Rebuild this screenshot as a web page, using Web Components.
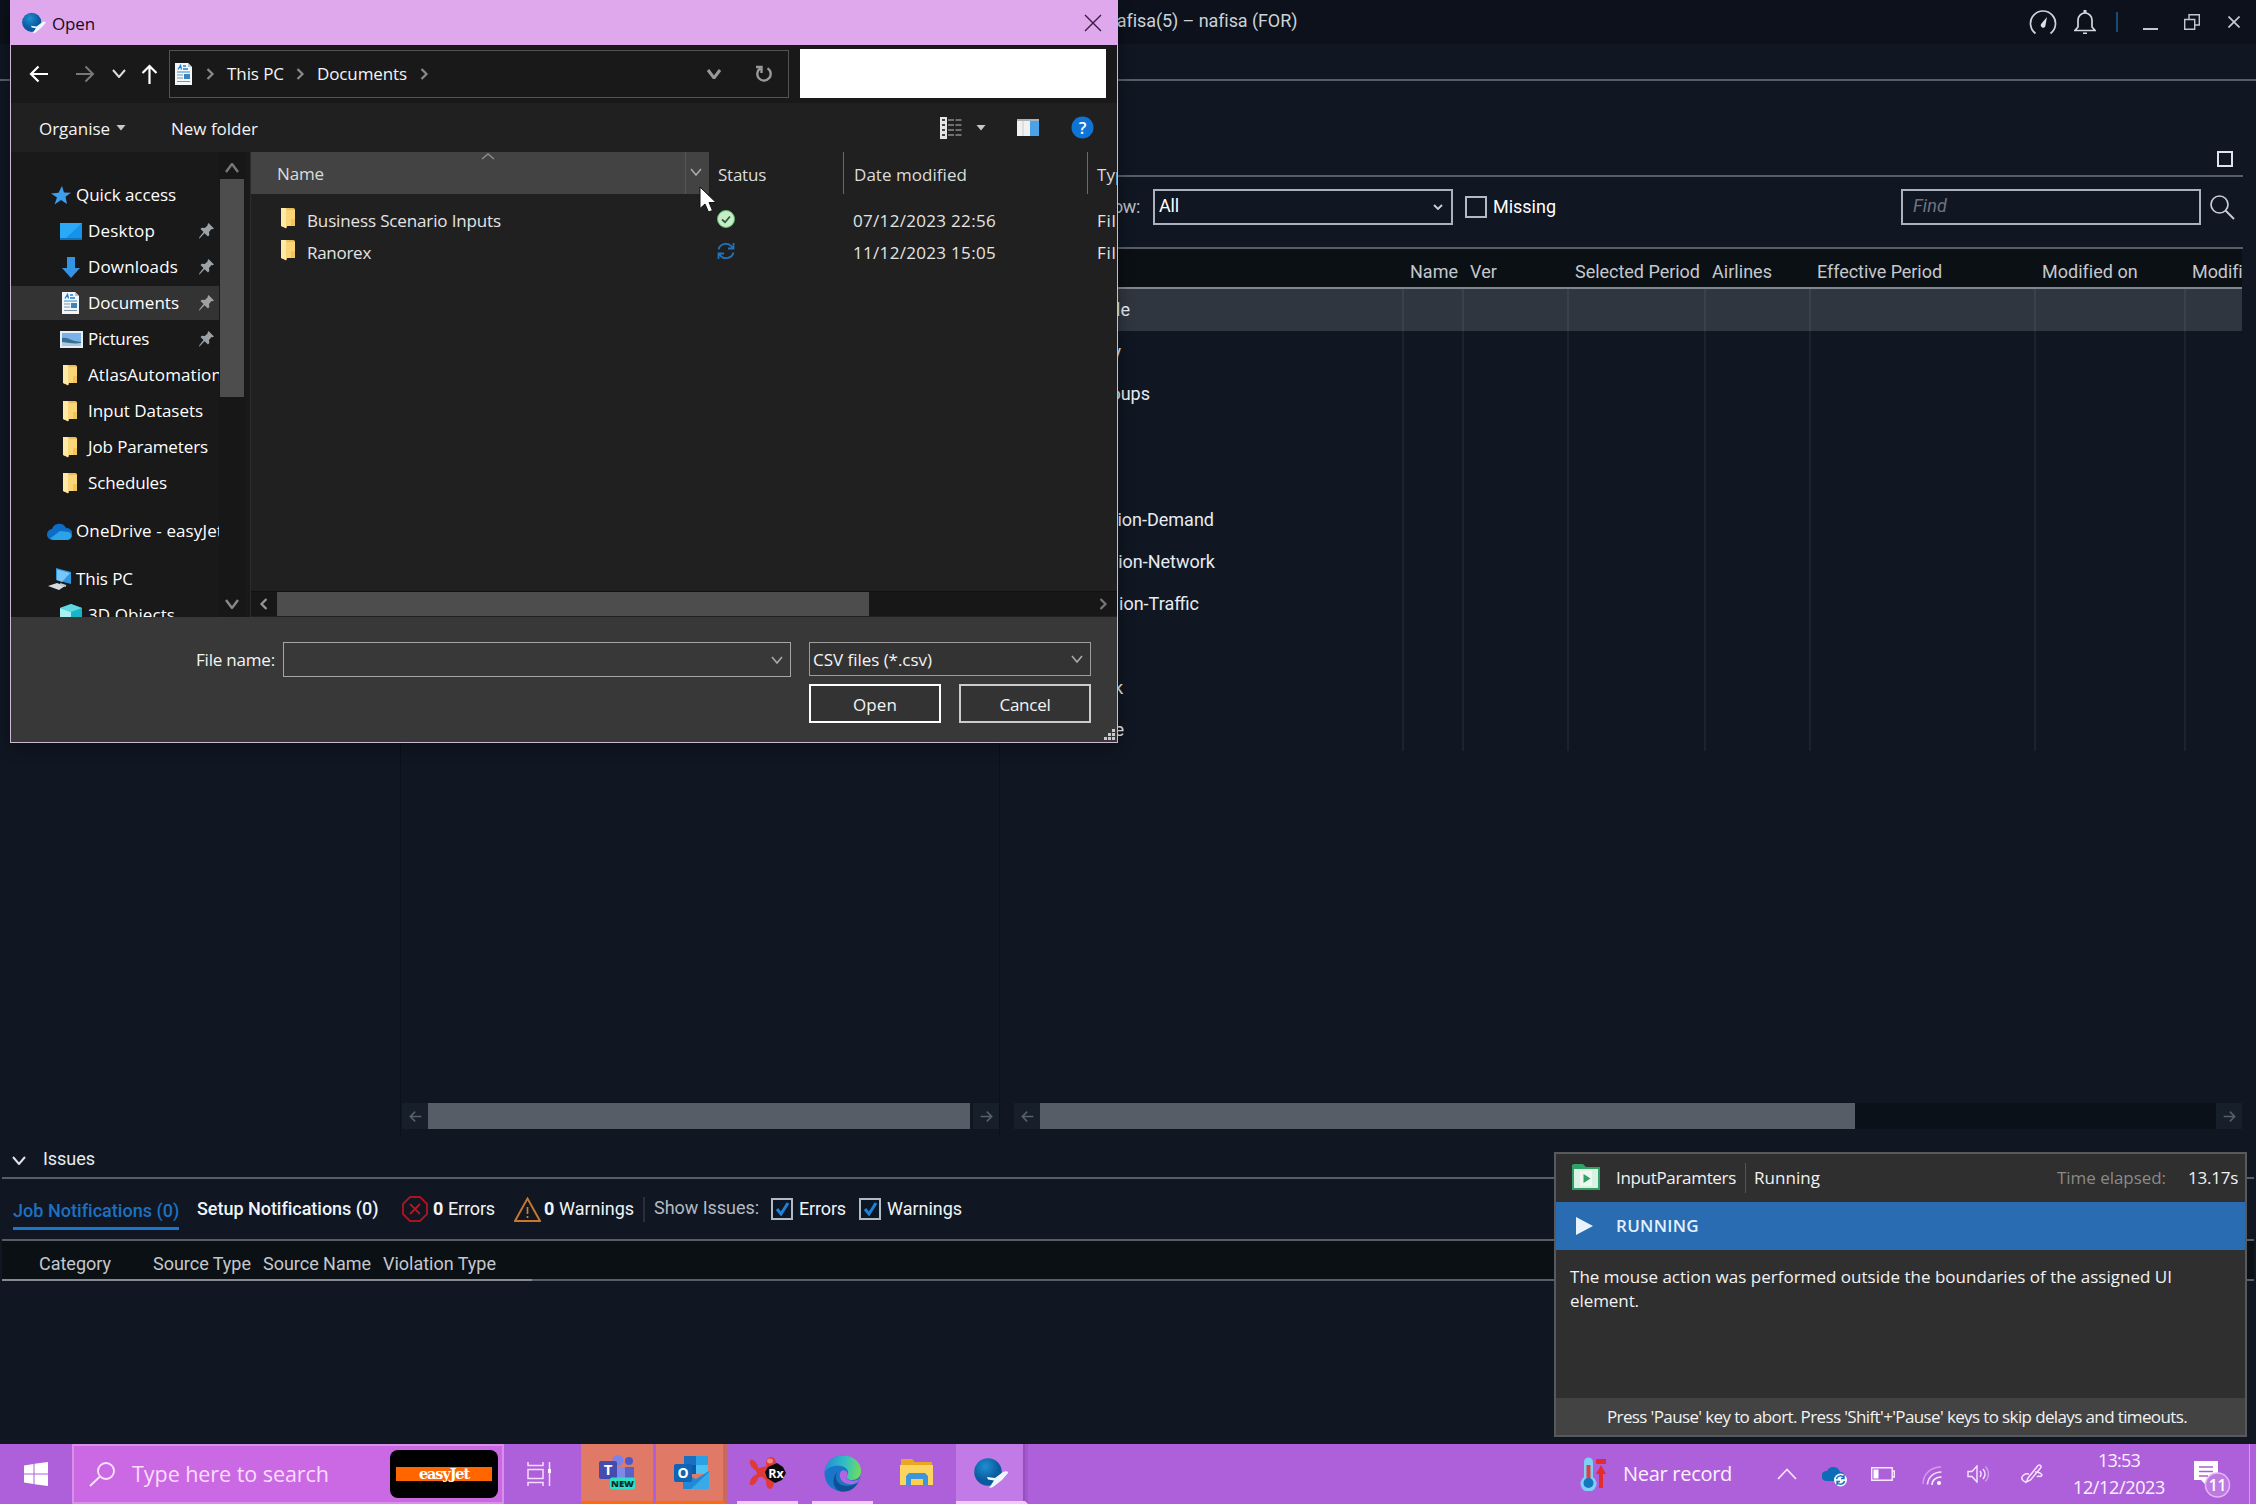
<!DOCTYPE html>
<html lang="en"><head><meta charset="utf-8"><title>Open</title>
<style>
html,body{margin:0;padding:0;width:2256px;height:1504px;overflow:hidden;background:#101722}
</style></head><body>
<desk-top></desk-top>
<script>
/* Lays a flex row out from start positions: each item is [start, width, html, style]. */
const row=(origin,items)=>{let c=origin;return items.map(([x,w,html,st=''])=>{const m=x-c;c=x+w;
  return `<div style="flex:none;margin-left:${m}px;width:${w}px;${st}">${html}</div>`}).join('')};
const T=(x,w,text,st='')=>[x,w,`<ui-text w="${w}">${text}</ui-text>`,st];
const I=(x,w,name,st='')=>[x,w,`<ui-icon name="${name}"></ui-icon>`,st];

const base=`*{box-sizing:border-box}.row{display:flex;align-items:center}svg{display:block}`;
const make=(tag,css,html)=>customElements.define(tag,class extends HTMLElement{
  connectedCallback(){if(this.shadowRoot)return;
    this.attachShadow({mode:'open'}).innerHTML=`<style>${base}${css}</style>${html}`}});

const folder=`<svg width="16" height="21" viewBox="0 0 16 21"><path d="M1 0h12.500l1.500 1v17H7l-1 2.500L1 18z" fill="#e9bf5a"/><path d="M1 0h4.500l1 1v19L1 18z" fill="#ffe9a6"/><path d="M6.500 2H15v16H6.500z" fill="#fad679"/><path d="M11 11h4v7h-4z" fill="#f3c558"/></svg>`;
const page=`<svg width="17" height="22" viewBox="0 0 17 22"><path d="M0 0h13l4 4v18H0z" fill="#f4f7fa"/><path d="M13 0v4h4z" fill="#b8c4cd"/><path d="M3 6.500l2.500-4 1 4M8 3h3M8 6h5" stroke="#1e7fd0" stroke-width="1.300" fill="none"/><path d="M2 9h13" stroke="#4b9fd4" stroke-width="1.200"/><path d="M2 12h6M2 15h6M2 18.500h13" stroke="#7d94a6" stroke-width="1"/><path d="M9 11h6v5H9z" fill="#3b84bd"/></svg>`;
const globe=(w,h)=>`<svg width="${w}" height="${h}" viewBox="0 0 36 30"><defs><radialGradient id="g" cx=".4" cy=".3"><stop offset="0" stop-color="#1d8fd0"/><stop offset="1" stop-color="#0b5a9e"/></radialGradient></defs><circle cx="14" cy="14" r="13.800" fill="url(#g)"/><path d="M13 19l8 1 8-6c3-1.500 6-.5 5 1l-6 7-9 7c-2 1-4 1-3-.5l4-6-6-1z" fill="#eef7ff"/></svg>`;
const chev=(w,h,c,s=2)=>`<svg width="${w}" height="${h}" viewBox="0 0 ${w} ${h}"><path d="M1 1l${w/2-1} ${h-2} ${w/2-1}-${h-2}" fill="none" stroke="${c}" stroke-width="${s}"/></svg>`;
const right=c=>`<svg width="9" height="12" viewBox="0 0 9 12"><path d="M1.500 1l5 5-5 5" fill="none" stroke="${c}" stroke-width="2.200"/></svg>`;
const arrow=(w,c,s=2)=>`<svg width="${w}" height="${w}" viewBox="0 0 20 20"><path d="M19 10H2M9.500 2.500L2 10l7.500 7.500" fill="none" stroke="${c}" stroke-width="${s}"/></svg>`;
const icons={
 folder,page,globe:globe(25,22),globeBig:globe(36,30),
 back:arrow(20,'#fff',2.2),
 forward:`<div style="transform:scaleX(-1)">${arrow(20,'#787878')}</div>`,
 sbLeft:arrow(13,'#58606a',2.4),
 sbRight:`<div style="transform:scaleX(-1)">${arrow(13,'#58606a',2.4)}</div>`,
 up:`<svg width="17" height="20" viewBox="0 0 17 20"><path d="M8.500 20V2M1.500 9l7-7 7 7" fill="none" stroke="#fff" stroke-width="2.200"/></svg>`,
 down:chev(14,9,'#ddd'),ddown:chev(14,10,'#999',3),combo:chev(12,8,'#aaa',1.6),appDown:chev(10,6,'#ccd2da',1.8),issueDown:chev(14,9,'#dfe4ea'),
 sortUp:`<div style="transform:scaleY(-1)">${chev(14,7,'#8c8c8c',1.5)}</div>`,
 scUp:`<div style="transform:scaleY(-1)">${chev(14,10,'#777',2.4)}</div>`,scDown:chev(14,10,'#888',2.4),
 right:right('#8a8a8a'),scRight:right('#777'),scLeft:`<div style="transform:scaleX(-1)">${right('#999')}</div>`,
 refresh:`<svg width="18" height="18" viewBox="0 0 18 18"><path d="M12.500 3.200A6.700 6.700 0 1 1 5 3.500M1 2h5.500v6" fill="none" stroke="#999" stroke-width="2.400"/></svg>`,
 close:`<svg width="18" height="18" viewBox="0 0 18 18"><path d="M1 1l16 16M17 1L1 17" stroke="#3a1a44" stroke-width="1.400"/></svg>`,
 tri:`<svg width="10" height="6" viewBox="0 0 10 6"><path d="M.5 0h9L5 5.500z" fill="#c8c8c8"/></svg>`,
 view:`<svg width="23" height="22" viewBox="0 0 23 22"><path d="M0 0h7v22H0z" fill="#e4e4e4"/><path d="M2 3h3M2 8h3M2 13h3M2 18h3" stroke="#444" stroke-width="2"/><path d="M8 3h14M8 8h14M8 13h14M8 18h14" stroke="#8a8a8a" stroke-width="1.400" stroke-dasharray="6 1.500"/></svg>`,
 preview:`<svg width="22" height="17" viewBox="0 0 22 17"><path d="M0 0h22v17H0z" fill="#f1f1f1"/><path d="M13 2h9v15h-9z" fill="#4aa3e8"/><path d="M0 0h22v2H0z" fill="#a9b4bb"/><path d="M6 2v15" stroke="#ccc"/></svg>`,
 star:`<svg width="20" height="19" viewBox="0 0 20 19"><path d="M11 0l2 6.500 7 .2-5.500 4L16 18l-6-4-6.500 4.500L6 11.500 0 7.500l7.500-.7z" fill="#3aa0ee"/></svg>`,
 desktop:`<svg width="22" height="17" viewBox="0 0 22 17"><path d="M0 0h22v17H0z" fill="#1593ea"/><path d="M0 0h22L6 15H0z" fill="#2aa9f7"/><path d="M0 15h22v2H0z" fill="#0d75c0"/></svg>`,
 download:`<svg width="18" height="21" viewBox="0 0 18 21"><path d="M5 0h8v11h5l-9 10-9-10h5z" fill="#3493e4"/></svg>`,
 picture:`<svg width="23" height="17" viewBox="0 0 23 17"><path d="M0 0h23v17H0z" fill="#e6eef4"/><path d="M2 2h19v13H2z" fill="#79b1e8"/><path d="M2 7c6-1 8 3 19 4v4H2z" fill="#3c6c90"/><path d="M2 11c8 1 12 2 19 1v3H2z" fill="#a9c8dd"/></svg>`,
 cloud:`<svg width="25" height="18" viewBox="0 0 25 18"><path d="M5 7a7.500 7.500 0 0 1 14-1 5.500 5.500 0 0 1 1 12H6A5.500 5.500 0 0 1 5 7z" fill="#0f6cc4"/><path d="M3 16.500L13 9l9 1c4 2 3 8-2 8H6z" fill="#2ba3e8"/></svg>`,
 pc:`<svg width="24" height="23" viewBox="0 0 24 23"><path d="M8 0l15 4v12L8 12z" fill="#2f96e0"/><path d="M9 1.500l13 3.500-8 9-5-2z" fill="#79c6f7"/><path d="M0 18l9-3 8 3-6 4z" fill="#d6dde2"/><path d="M12 16l6 2" stroke="#bcc" stroke-width="2"/></svg>`,
 cube:`<svg width="22" height="22" viewBox="0 0 22 22"><path d="M11 0l11 4v14l-11 4-11-4V4z" fill="#19b4c8"/><path d="M0 4l11 4v14L0 18z" fill="#a9f0f2"/><path d="M0 4l11-4 11 4-11 4z" fill="#5ed9e4"/></svg>`,
 pin:`<svg width="15" height="16" viewBox="0 0 15 16"><path d="M9.500 0L15 5.500l-1.500.8-1-.2-2.500 3 .3 3-1.300 1.400-3.500-3.200L1 15 0 16l.5-2 4-5L1.500 6l1.300-1.200 3 .1 3-2.700-.2-1z" fill="#9da2a6"/></svg>`,
 ok:`<svg width="18" height="18" viewBox="0 0 18 18"><circle cx="9" cy="9" r="8.500" fill="#c6ecc9" stroke="#62b76c"/><path d="M5 9.500l3 2.700L13 6.500" fill="none" stroke="#2b5b32" stroke-width="1.700"/></svg>`,
 sync:`<svg width="18" height="18" viewBox="0 0 18 18"><path d="M1.500 7.500a7.500 7.500 0 0 1 14-1.500M16.500 10.500a7.500 7.500 0 0 1-14 1.500M16.500 1v5.500H11M1.500 17v-5.500H7" fill="none" stroke="#2272b9" stroke-width="1.800"/></svg>`,
 gauge:`<svg width="28" height="25" viewBox="0 0 28 25"><path d="M6.500 23.500a12.500 12.500 0 1 1 15 0" fill="none" stroke="#cdd2da" stroke-width="1.700"/><path d="M18 7l-1.500 8a2.400 2.400 0 1 1-4-1.500z" fill="#dde1e6"/></svg>`,
 bell:`<svg width="22" height="25" viewBox="0 0 22 25"><path d="M1 20.500h20l-3-3.500V10a7 7 0 0 0-14 0v7zM11 3V1" fill="none" stroke="#d3d8df" stroke-width="1.700"/><path d="M9 22.500h4v1.500H9zM9.500 0h3v3h-3z" fill="#d3d8df"/></svg>`,
 restore:`<svg width="16" height="16" viewBox="0 0 16 16"><path d="M.7 5.500h10v9.800H.7zM5 5V.7h10.300V11h-4" fill="none" stroke="#c3c8d0" stroke-width="1.400"/></svg>`,
 x:`<svg width="12" height="12" viewBox="0 0 12 12"><path d="M.5.500l11 11M11.500.500l-11 11" stroke="#c9ced6" stroke-width="1.600"/></svg>`,
 search:`<svg width="25" height="25" viewBox="0 0 25 25"><circle cx="9.500" cy="9.500" r="8.500" fill="none" stroke="#c8cdd5" stroke-width="1.700"/><path d="M15.500 15.500L24 24" stroke="#c8cdd5" stroke-width="2"/></svg>`,
 error:`<svg width="26" height="26" viewBox="0 0 26 26"><path d="M8 1h10l7 7v10l-7 7H8l-7-7V8z" fill="none" stroke="#a81420" stroke-width="1.900"/><path d="M8 8l10 10M18 8L8 18" stroke="#b01824" stroke-width="1.800"/></svg>`,
 warn:`<svg width="27" height="25" viewBox="0 0 27 25"><path d="M13.500 1.500L26 24H1z" fill="none" stroke="#c8782a" stroke-width="1.900"/><path d="M13.500 10v7M13.500 19v2" stroke="#d08030" stroke-width="1.700"/></svg>`,
 check:`<svg width="22" height="22" viewBox="0 0 22 22"><path d="M1 1h20v20H1z" fill="#0b1626" stroke="#b2bac4" stroke-width="2"/><path d="M6 11l4 5 7-11" fill="none" stroke="#1f82d8" stroke-width="3"/></svg>`,
 uncheck:`<svg width="22" height="22" viewBox="0 0 22 22"><path d="M1 1h20v20H1z" fill="none" stroke="#b2bac4" stroke-width="2"/></svg>`,
 play:`<svg width="17" height="18" viewBox="0 0 17 18"><path d="M0 0l17 9-17 9z" fill="#e9f3ff"/></svg>`,
 clip:`<svg width="28" height="26" viewBox="0 0 28 26"><path d="M0 1l2-1h9l3 3h14v23H0z" fill="#2fa066"/><path d="M2 5h24v19H2z" fill="#d9f2e3"/><path d="M8 7h12v15H8z" fill="#eef8ef"/><path d="M11.500 10l7 4.500-7 4.500z" fill="#2fa066"/></svg>`,
 win:`<svg width="24" height="24" viewBox="0 0 24 24"><path d="M0 3.500L9.500 2v9.500H0zM10.500 1.800L24 0v11.500H10.500zM0 12.500h9.500V22L0 20.500zM10.500 12.500H24V24l-13.500-1.800z" fill="#fff"/></svg>`,
 tsearch:`<svg width="27" height="25" viewBox="0 0 27 25"><circle cx="17" cy="9" r="8" fill="none" stroke="#fbe6ff" stroke-width="1.800"/><path d="M11 14.500L1 24" stroke="#fbe6ff" stroke-width="1.800"/></svg>`,
 task:`<svg width="25" height="24" viewBox="0 0 25 24"><path d="M1 0v3.500h15V0M1 7.500h15v9H1zM1 24v-3.500h15V24M22.500 0v24" fill="none" stroke="#f6dcfc" stroke-width="1.500"/><path d="M21 7h3v4h-3z" fill="#fff"/></svg>`,
 teams:`<svg width="40" height="36" viewBox="0 0 40 36"><circle cx="20" cy="5.500" r="5.500" fill="#7b83eb"/><circle cx="31" cy="6" r="4" fill="#5059c9"/><path d="M13 12h15v16H13z" fill="#8088e8"/><path d="M27 12h9v12h-9z" fill="#5a62c3"/><rect x="1" y="6" width="18" height="18" rx="2" fill="#444cb0"/><text x="10" y="20" font-family="Open Sans" font-size="15" font-weight="700" fill="#fff" text-anchor="middle">T</text><rect x="12" y="22.500" width="25" height="12" rx="2" fill="#2ce0c4"/><text x="24.500" y="32" font-family="Open Sans" font-size="9.500" font-weight="800" fill="#0a2a28" text-anchor="middle">NEW</text></svg>`,
 outlook:`<svg width="36" height="34" viewBox="0 0 36 34"><path d="M10 0h24v17H10z" fill="#1a6fc0"/><path d="M22 0h12v9H22z" fill="#2ca0e4"/><path d="M10 9h12v9H10z" fill="#0f5aa5"/><path d="M22 9h12v9H22z" fill="#4cc2f2"/><path d="M9 17l13 6 13-8v18H9z" fill="#2089d8"/><path d="M35 16v17H17z" fill="#39aae8"/><rect x="0" y="8" width="18" height="18" rx="2" fill="#0f64b5"/><text x="9" y="22" font-family="Open Sans" font-size="14" font-weight="700" fill="#fff" text-anchor="middle">O</text></svg>`,
 rx:`<svg width="37" height="32" viewBox="0 0 37 32"><g fill="#df3a38"><ellipse cx="22" cy="6" rx="5" ry="6"/><ellipse cx="5" cy="8" rx="3" ry="6" transform="rotate(-35 5 8)"/><ellipse cx="5" cy="23" rx="3" ry="6" transform="rotate(35 5 23)"/><ellipse cx="21" cy="25" rx="4" ry="7"/><path d="M6 12l12-3 6 8-6 7-5-4-7 1 2-5z"/></g><ellipse cx="21" cy="4" rx="3" ry="2.500" fill="#f68a80"/><path d="M19 10l9-4 6 4 3 6-4 7-7 3-8-5-2-6z" fill="#0b0b0d"/><text x="27" y="20.500" font-family="Open Sans" font-size="12.500" font-weight="700" fill="#fff" text-anchor="middle">Rx</text></svg>`,
 edge:`<svg width="38" height="37" viewBox="0 0 38 37"><defs><linearGradient id="a" x1="0" y1=".2" x2="1" y2=".3"><stop offset="0" stop-color="#1c8fd8"/><stop offset=".6" stop-color="#35c1c0"/><stop offset="1" stop-color="#6fdc5a"/></linearGradient></defs><circle cx="18.500" cy="18.500" r="18" fill="#1a76c9"/><path d="M.8 17C2 6 10 .5 19 .5 30 .5 37 8 37 16c0 6-4 9-9 9-4 0-6-2-5-4 3-4 0-9-6-10C10 10 4 12 .8 17z" fill="url(#a)"/><path d="M13 17c-4 9 4 19 21 11-5 8-12 9-17 8.500C9 34 7 24 13 17z" fill="#114f93"/><path d="M16.500 17c2-3 6-2 7 1 .6 2-1.500 3-1 5 1 3 8 4 13 1-2 4-4 4-6 5-9 2-16-5-13-12z" fill="#b366df"/></svg>`,
 explorer:`<svg width="33" height="28" viewBox="0 0 33 28"><path d="M1 0h11l3 3h17v23H1z" fill="#e8a820"/><path d="M0 6h33v20H0z" fill="#fbd560"/><path d="M6 27V17l3-3h16l3 3v10h-5v-7H11v7z" fill="#3f95dc"/><path d="M11 20h12v6H11z" fill="#fbcf50"/></svg>`,
 thermo:`<svg width="28" height="34" viewBox="0 0 28 34"><path d="M5 5a4.500 4.500 0 0 1 9 0v15a8 8 0 1 1-9 0z" fill="#7fd0f6"/><path d="M7.500 8h4v14h-4z" fill="#e23c3c"/><circle cx="9.500" cy="26" r="5" fill="#1577be"/><path d="M17 2h10v5H17zM22 8l5 9h-3v14h-4V17h-3z" fill="#e32d2d"/></svg>`,
 tchev:`<svg width="20" height="12" viewBox="0 0 20 12"><path d="M1 11L10 1.500 19 11" fill="none" stroke="#f8e2ff" stroke-width="1.800"/></svg>`,
 tcloud:`<svg width="26" height="21" viewBox="0 0 26 21"><path d="M5 5a7 7 0 0 1 13 1 5 5 0 0 1 3 9H4A5 5 0 0 1 5 5z" fill="#0c6cb8"/><circle cx="18.500" cy="14" r="6.500" fill="#f3f8fc"/><path d="M14.500 13a4 4 0 0 1 7.500-1M22.500 15a4 4 0 0 1-7.500 1M22 9v3.500h-3M15 19v-3.500h3" fill="none" stroke="#1374c4" stroke-width="1.400"/></svg>`,
 battery:`<svg width="24" height="14" viewBox="0 0 24 14"><path d="M.7.700h20.500v12.600H.7zM21.500 4H23.300v6h-2" fill="none" stroke="#fbeaff" stroke-width="1.400"/><path d="M2.500 2.500h5v9h-5z" fill="#fff"/></svg>`,
 wifi:`<svg width="21" height="20" viewBox="0 0 21 20"><g fill="none" stroke-width="1.500"><path d="M1 18C1 8 9 1 19 1" stroke="#d49cea"/><path d="M5.500 18.500C6 11 12 6 19.500 6" stroke="#f4dafc"/><path d="M10 19c0-5 4-8 9.500-8" stroke="#fdf0ff"/></g><circle cx="17" cy="17" r="2" fill="#fff"/></svg>`,
 sound:`<svg width="22" height="18" viewBox="0 0 22 18"><g fill="none" stroke="#f8e4ff" stroke-width="1.400"><path d="M1 6.500h4L10 1v16l-5-5.500H1z"/><path d="M13 6c1.500 2 1.500 4 0 6M16 4c2.500 3 2.500 7 0 10"/><path d="M18.500 1.500c4 5 4 10 0 15" stroke="#d49cea"/></g></svg>`,
 pen:`<svg width="22" height="20" viewBox="0 0 22 20"><path d="M7 14L17 1.500c2-1.500 4 .5 2.500 2.500L9.500 16l-4 2zM8 10c-4-1-8 2-7 5s5 4 6 1M14 8c4 0 6 1 7 3-1 3-4 0-5 2" fill="none" stroke="#f8e4ff" stroke-width="1.500"/></svg>`,
 note:`<svg width="40" height="38" viewBox="0 0 40 38"><path d="M0 0h24v19H13v6l-6-6H0z" fill="#fff"/><path d="M5 6h14M5 10.500h14M5 15h9" stroke="#a860cf" stroke-width="1.500"/><circle cx="23.500" cy="24" r="12" fill="#bd7be2" stroke="#e3b6f4" stroke-width="1.500"/><text x="23.500" y="30" font-family="Open Sans" font-size="15.500" font-weight="600" fill="#fff" text-anchor="middle">11</text></svg>`,
 help:`<svg width="23" height="23" viewBox="0 0 23 23"><circle cx="11.500" cy="11.500" r="11" fill="#0f74d4"/><text x="11.500" y="17.500" font-family="Open Sans" font-size="17" font-weight="600" fill="#fff" text-anchor="middle">?</text></svg>`,
 grip:`<svg width="12" height="12" viewBox="0 0 12 12"><path d="M8 0h3v3H8zM4 4h3v3H4zM8 4h3v3H8zM0 8h3v3H0zM4 8h3v3H4zM8 8h3v3H8z" fill="#c9c9c9"/></svg>`,
 cursor:`<svg width="20" height="30" viewBox="0 0 20 30"><path d="M1 1v21.500l5-4.500 3.500 8 4-1.500-3.500-8h7z" fill="#fff" stroke="#111" stroke-width="1"/></svg>`
};
customElements.define('ui-icon',class extends HTMLElement{connectedCallback(){if(this.shadowRoot)return;
  this.attachShadow({mode:'open'}).innerHTML=`<style>:host{display:block;line-height:0}svg{display:block}</style>${icons[this.getAttribute('name')]}`}});

/* Single-line label whose tracking is tuned so that it spans exactly w pixels. */
customElements.define('ui-text',class extends HTMLElement{connectedCallback(){if(this.shadowRoot)return;
  const r=this.attachShadow({mode:'open'});
  r.innerHTML=`<style>:host{display:block;white-space:pre}span{display:inline-block}</style><span><slot></slot></span>`;
  const s=r.querySelector('span'),w=+this.getAttribute('w'),n=this.textContent.length;
  if(w&&n>1)s.style.letterSpacing=((w-s.getBoundingClientRect().width)/n).toFixed(3)+'px'}});

const hr=(st='')=>`<div style="height:2px;background:#565e67;flex:none;${st}"></div>`;
const cols=[1014,1402,1462,1567,1704,1809,2034,2184,2242];
const gridRows=[['le',1130],['y',1121],['oups',1150],0,0,['ion-Demand',1214],['ion-Network',1215],['ion-Traffic',1199],0,['k',1123],['e',1124]];
const gridRow=(r,i)=>`<div class="gr${i?'':' sel'}">${cols.slice(0,-1).map((c,k)=>`<div class="cell" style="width:${cols[k+1]-c}px">${k||!r?'':`<div style="width:${r[1]-1014}px;text-align:right">${r[0]}</div>`}</div>`).join('')}</div>`;
const sbar=(a,b,t,e)=>`<div class="sb"><div class="ab"><ui-icon name="sbLeft"></ui-icon></div><div style="width:${b-a}px;background:#565d66;height:26px"></div><div style="flex:1;background:${t};height:26px"></div><div class="ab"><ui-icon name="sbRight"></ui-icon></div></div>`;

make('planner-grid',`:host{display:flex;flex-direction:column;width:1229px;flex:none}
.top{height:94px;flex:none;display:flex;justify-content:flex-end;align-items:flex-end;padding:0 10px 8px 0}
.sq{width:16px;height:16px;border:2px solid #dfe4ea}
.filter{height:70px;padding-bottom:10px;flex:none;color:#fff}
.head{height:38px;background:#0b1015;color:#c4c8cd;flex:none;overflow:hidden;padding-top:6px;width:1228px}
.gr{display:flex;height:42px;width:1228px;color:#e8ecf1}.sel{background:#2f3640}
.cell{flex:none;display:flex;align-items:center;padding-bottom:2px}.cell+.cell{border-left:2px solid #1b232d}.sel .cell+.cell{border-color:#39414b}
.fill{flex:1}.box{height:36px;border:2px solid #aab2bc;display:flex;align-items:center}
.sb{display:flex;height:26px;margin-bottom:8px;width:1228px;flex:none}.ab{width:26px;height:26px;background:#171f2a;display:grid;place-items:center}`,
`<div class="top"><div class="sq"></div></div>${hr()}
<div class="row filter">${row(1014,[T(1093,47,'Show:','color:#b9bfc8;margin-top:-2px'),[1153,300,`<div class="box"><div style="margin:-3px 0 0 4px"><ui-text w="20">All</ui-text></div><ui-icon name="appDown" style="margin-left:254px"></ui-icon></div>`],I(1465,22,'uncheck'),T(1493,63,'Missing','margin-top:-1px'),[1901,300,`<div class="box"><div style="margin:-3px 0 0 10px;font-style:italic;color:#6e7580"><ui-text w="34">Find</ui-text></div></div>`],I(2210,25,'search')])}</div>${hr()}
<div class="row head">${row(1014,[T(1410,48,'Name'),T(1470,27,'Ver'),T(1575,125,'Selected Period'),T(1712,60,'Airlines'),T(1817,125,'Effective Period'),T(2042,95,'Modified on'),T(2192,50,'Modifi')])}</div>
${hr('background:#80878d;width:1228px')}
${gridRows.map(gridRow).join('')}<div class="fill"></div>
${sbar(1040,1855,'#0b1118')}`);

make('planner-app',`:host{display:flex;flex-direction:column;height:1444px;width:2256px;background:#101722;font:18px Roboto,sans-serif;color:#e8ecf1}
.title{height:44px;background:#0c111b;flex:none;padding-bottom:2px;color:#ccd1d8}
.menu{height:35px;flex:none}.main{display:flex;height:1056px;flex:none}
.left{width:401px;border-right:1px solid #0b111a;flex:none}
.mid{width:599px;border-right:1px solid #0b111a;margin-right:14px;display:flex;align-items:flex-end;flex:none}
.sb{display:flex;height:26px;margin-bottom:8px;width:599px;padding-left:1px}.ab{width:26px;height:26px;background:#171f2a;display:grid;place-items:center}`,
`<div class="row title">${row(0,[T(1107,189,'nafisa(5) – nafisa (FOR)','margin-top:-1px'),I(2029,28,'gauge','margin-top:3px'),I(2074,22,'bell','margin-top:3px'),[2116,2,'<div style="height:20px;background:#174c74"></div>','margin-top:2px'],[2143,15,'<div style="height:2px;background:#c3c8d0;margin-top:16px"></div>'],I(2184,16,'restore','margin-top:2px'),I(2228,12,'x','margin-top:2px')])}</div>
<div class="menu"></div>${hr()}
<div class="main"><div class="left"></div><div class="mid">${sbar(428,970,'transparent')}</div><planner-grid></planner-grid></div>
<issues-panel></issues-panel>`);

make('issues-panel',`:host{display:block;padding:0 2px}.h{height:40px;padding-top:2px}.tabs{height:60px;color:#f1f4f8;padding-bottom:2px}.head{height:38px;background:#0b1015;color:#c4c8cd;padding-top:6px}`,
`<div class="row h">${row(2,[I(12,14,'issueDown','padding-top:4px'),T(43,52,'Issues')])}</div>${hr()}
<div class="row tabs">${row(2,[T(13,166,'Job Notifications (0)','color:#1d71c2;font-weight:500;border-bottom:3px solid #1777cf;padding:13px 0 6px'),T(197,181,'Setup Notifications (0)','font-weight:500'),I(402,26,'error','margin-top:2px'),T(433,10,'0','font-weight:700'),T(448,47,'Errors'),I(514,27,'warn','margin-top:2px'),T(544,10,'0','font-weight:700'),T(559,75,'Warnings'),[643,2,'<div style="height:25px;background:#27303b"></div>','margin-top:2px'],T(654,105,'Show Issues:','color:#b4bac4;margin-top:-2px'),I(771,22,'check','margin-top:1px'),T(799,47,'Errors'),I(859,22,'check','margin-top:1px'),T(887,75,'Warnings')])}</div>${hr()}
<div class="row head">${row(2,[T(39,72,'Category'),T(153,98,'Source Type'),T(263,108,'Source Name'),T(383,113,'Violation Type')])}</div>
<div style="display:flex">${hr('width:530px;background:#858b90')}${hr('flex:1')}</div>`);

const tree=[['star',51,76,100,'Quick access'],['desktop',60,88,67,'Desktop',1],['download',62,88,90,'Downloads',1],['page',62,88,91,'Documents',2],['picture',60,88,61,'Pictures',1],['folder',62,88,134,'AtlasAutomation'],['folder',62,88,115,'Input Datasets'],['folder',62,88,120,'Job Parameters'],['folder',62,88,79,'Schedules'],['cloud',47,76,147,'OneDrive - easyJet',0,12],['pc',48,76,57,'This PC',0,12],['cube',60,88,87,'3D Objects']];
const iw={star:20,desktop:22,download:18,page:17,picture:23,folder:16,cloud:25,pc:24,cube:22};
make('file-tree',`:host{display:flex;width:236px;height:465px;background:#191919;overflow:hidden;flex:none;color:#fff}
.list{width:208px;padding-top:26px;overflow:hidden;flex:none}.it{height:36px;overflow:hidden}
.on{background:linear-gradient(#333,#333) 0 0/100% 34px no-repeat}
.tx{margin-top:-3px}
.bar{width:26px;background:#171717;display:flex;flex-direction:column;align-items:center}
.thumb{width:24px;height:218px;background:#4d4d4d;margin-top:6px}`,
`<div class="list">${tree.map(([n,x,tx,w,t,p,m])=>`<div class="row it${p==2?' on':''}" style="margin-top:${m||0}px">${row(11,[I(x,iw[n],n,'margin-top:-2px'),T(tx,w,t,'margin-top:-3px'),...(p?[I(199,15,'pin','margin-top:-2px')]:[])])}</div>`).join('')}</div>
<div class="bar"><ui-icon name="scUp" style="margin-top:11px"></ui-icon><div class="thumb"></div><ui-icon name="scDown" style="margin:auto 0 8px"></ui-icon></div>`);

const file=(n,w,s,d)=>`<div class="row f">${row(252,[I(281,16,'folder','margin-top:-4px'),T(308,w,n),I(718,18,s,'margin-top:-3px'),T(854,143,d),T(1098,30,'File')])}</div>`;
make('file-list',`:host{display:flex;flex-direction:column;flex:1;height:465px;background:#202020;overflow:hidden;border-left:1px solid #2c2c2c;margin-left:3px;color:#e4e4e4}
.hd{height:42px;flex:none;color:#dcdcdc}.n{width:458px;height:42px;background:#434343;flex:none;display:flex}
.name{width:435px;border-right:1px solid #565656;display:flex;flex-direction:column;padding-left:26px}
.c{flex:none;height:42px;display:flex;align-items:center;padding-top:2px}
.f{height:32px;flex:none}.hs{margin-top:auto;height:25px;background:#171717;flex:none;margin-bottom:1px;border-top:1px solid #111}`,
`<div class="row hd"><div class="n"><div class="name"><ui-icon name="sortUp" style="margin:1px 0 0 204px"></ui-icon><div style="margin-top:2px"><ui-text w="47">Name</ui-text></div></div><ui-icon name="combo" style="margin:16px 0 0 4px"></ui-icon></div>
<div class="c" style="width:135px;padding-left:9px;border-right:1px solid #6a6a6a"><ui-text w="48">Status</ui-text></div><div class="c" style="width:244px;padding-left:10px;border-right:1px solid #6a6a6a"><ui-text w="113">Date modified</ui-text></div><div class="c" style="padding-left:9px"><ui-text w="38">Type</ui-text></div></div>
<div style="height:10px;flex:none"></div>${file('Business Scenario Inputs',194,'ok','07/12/2023 22:56')}${file('Ranorex',64,'sync','11/12/2023 15:05')}
<div class="row hs">${row(251,[I(259,9,'scLeft'),[277,592,'<div style="height:24px;background:#4d4d4d"></div>'],I(1099,9,'scRight')])}</div>`);

make('open-dialog',`:host{position:absolute;left:10px;top:0;width:1108px;height:743px;display:flex;flex-direction:column;font:17px "Open Sans","Noto Sans",sans-serif;color:#f4f4f4;border:1px solid #cfb8d6;border-top:0;background:#383838;box-shadow:0 4px 14px #0006}
.t{height:45px;background:#e0a8ec;color:#170a1c;flex:none;margin:0 -1px;padding:1px 0 0 1px}
.nav{height:58px;background:#191919;flex:none;padding-bottom:1px}.tools{height:49px;background:#202020;flex:none}
.body{display:flex;height:465px;background:#191919;flex:none}
.addr{height:48px;border:1px solid #535353}
.foot{display:flex;flex:1;padding:25px 0 0 0}
.in{height:35px;border:1px solid #9c9c9c;display:flex;align-items:center;justify-content:space-between;padding:0 7px 0 3px}
.btn{height:39px;border:2px solid #fff;background:#333;display:grid;place-items:center;padding-top:1px}`,
`<div class="row t">${row(11,[I(22,25,'globe'),T(52,43,'Open'),I(1084,18,'close')])}</div>
<div class="row nav">${row(11,[I(29,20,'back'),I(75,20,'forward'),I(112,14,'down'),I(141,17,'up'),[169,620,`<div class="row addr">${row(170,[I(175,17,'page'),I(206,9,'right'),T(227,57,'This PC','margin-top:-1px'),I(296,9,'right'),T(317,90,'Documents','margin-top:-1px'),I(420,9,'right'),I(707,14,'ddown'),I(755,18,'refresh')])}</div>`],[800,306,'<div style="height:49px;background:#fff"></div>']])}</div>
<div class="row tools">${row(11,[T(39,71,'Organise','margin-top:1px'),I(116,10,'tri'),T(171,87,'New folder','margin-top:1px'),I(940,23,'view'),I(976,10,'tri'),I(1017,22,'preview'),I(1071,23,'help')])}</div>
<div class="body"><file-tree></file-tree><file-list></file-list></div>
<div class="foot">${row(11,[T(196,79,'File name:','padding-top:6px'),[283,508,'<div class="in" style="border-color:#a5a5a5"><span></span><ui-icon name="combo"></ui-icon></div>'],
[809,282,`<div class="in" style="height:34px;background:#333"><ui-text w="119">CSV files (*.csv)</ui-text><ui-icon name="combo"></ui-icon></div><div style="display:flex;gap:18px;margin-top:8px"><div class="btn" style="width:132px"><ui-text w="44">Open</ui-text></div><div class="btn" style="width:132px;border-color:#ccc"><ui-text w="51">Cancel</ui-text></div></div>`],I(1104,12,'grip','align-self:flex-end;padding-bottom:1px')])}</div>`);

make('run-toast',`:host{position:absolute;left:1554px;top:1152px;width:693px;height:285px;display:flex;flex-direction:column;border:2px solid #565a5d;background:#2f2f2f;font:17px/24px "Open Sans","Noto Sans",sans-serif;color:#f2f2f2}
.h{height:48px;flex:none}.b{height:48px;background:#2a6cb1;flex:none}.m{flex:1;padding:15px 14px}.f{height:37px;background:#434343;flex:none}`,
`<div class="row h">${row(1556,[I(1572,28,'clip','margin-top:-2px'),T(1616,120,'InputParamters'),[1745,1,'<div style="height:30px;background:#555"></div>'],T(1754,66,'Running'),T(2057,109,'Time elapsed:','color:#8a8a8a'),T(2188,50,'13.17s')])}</div>
<div class="row b">${row(1556,[I(1576,17,'play'),T(1616,83,'RUNNING','font-weight:600;color:#e4f0ff')])}</div>
<div class="m"><ui-text w="602">The mouse action was performed outside the boundaries of the assigned UI</ui-text><ui-text w="69">element.</ui-text></div>
<div class="row f">${row(1556,[T(1607,580,"Press 'Pause' key to abort. Press 'Shift'+'Pause' keys to skip delays and timeouts.")])}</div>`);

const tile=(icon,bg,line,st='')=>`<div class="tile" style="background:${bg};border-bottom:3px solid ${line};${st}"><ui-icon name="${icon}"></ui-icon></div>`;
make('task-bar',`:host{display:flex;height:60px;width:2256px;background:#ae60db;font:18px "Open Sans","Noto Sans",sans-serif;color:#fdf0ff;align-items:center}
.search{height:60px;background:#cb69e4;border:2px solid #d98fea;color:#f9dcfe;font-size:21.500px}
.tile{height:60px;display:grid;place-items:center;padding-top:1px}
.ej{height:48px;background:#000;border-radius:8px;padding:17px 6px 0}.ej div{height:14px;background:#ff6600;color:#fff;font:900 14.500px/13px "DejaVu Serif",serif;padding-left:23px}`,
row(0,[I(24,24,'win'),[72,432,`<div class="row search">${row(74,[I(89,27,'tsearch'),T(132,197,'Type here to search','margin-top:-1px'),[390,108,'<div class="ej"><div><ui-text w="50">easyJet</ui-text></div></div>']])}</div>`],I(527,25,'task'),
[581,72,tile('teams','#e07966','#ff6a0a','padding-left:2px')],[656,71,tile('outlook','#e07966','#ff6a0a','border-right:4px solid #c9685e;padding-left:4px')],[737,61,tile('rx','transparent','#f3c9fb')],[812,61,tile('edge','transparent','#f3c9fb')],[886,61,tile('explorer','transparent','transparent')],[956,67,tile('globeBig','#c27be6','#f3c9fb','padding-left:5px')],[1023,5,'<div style="height:60px;background:#9650bd;border-bottom:3px solid #f3c9fb;border-right:3px solid #a458cc"></div>'],
I(1579,28,'thermo'),T(1623,109,'Near record','font-size:20px;margin-top:-1px'),I(1777,20,'tchev'),I(1822,26,'tcloud','padding-top:5px'),I(1871,24,'battery'),I(1922,21,'wifi','padding-top:4px'),I(1967,22,'sound'),I(2021,22,'pen'),
[2073,92,'<div style="padding-left:25px;line-height:27px"><ui-text w="42">13:53</ui-text></div><div style="line-height:27px"><ui-text w="92">12/12/2023</ui-text></div>'],I(2194,40,'note','padding-top:12px'),[2249,1,'<div style="height:60px;background:#d39cec"></div>']]));

make('desk-top',`:host{display:block;position:relative;width:2256px;height:1504px;overflow:hidden}.cur{position:absolute;left:699px;top:186px}`,
`<planner-app></planner-app><task-bar></task-bar><open-dialog></open-dialog><run-toast></run-toast><ui-icon class="cur" name="cursor"></ui-icon>`);
</script>
</body></html>
